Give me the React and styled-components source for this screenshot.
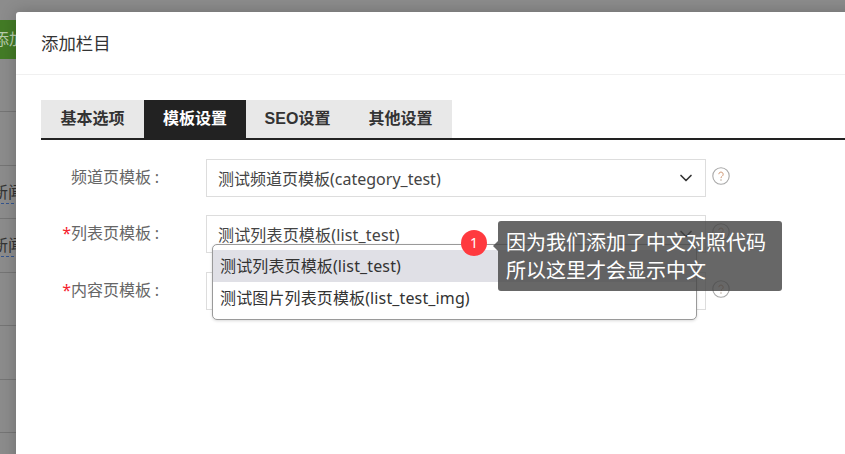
import React from "react";
import styled, { createGlobalStyle } from "styled-components";
import { ChevronDown } from "lucide-react";

const Global = createGlobalStyle`
  html, body { margin: 0; padding: 0; background: #8a8a8a; }
  * { box-sizing: border-box; }
`;
const FONT = `"Noto Sans", "Noto Sans CJK SC", sans-serif`;
const TAB_FONT = `"Liberation Sans", "Noto Sans CJK SC", sans-serif`;

const Page = styled.div`
  width: 845px; height: 454px; overflow: hidden; display: flex;
  background: #8c8c8c; font-family: ${FONT};
`;
const Backdrop = styled.div`
  width: 16px; flex: none; display: flex; flex-direction: column; overflow: hidden;
`;
const GreenButton = styled.div`
  margin-top: 20px; height: 39px; width: 16px; flex: none; background: #437b26;
  color: #b9ccae; font-size: 16px; line-height: 39px; white-space: nowrap; text-indent: -7px;
  overflow: hidden;
`;
const BackRow = styled.div`
  height: ${p => p.$h || 54}px; flex: none; border-bottom: 1px solid #757575;
  color: #333; font-size: 16px; overflow: hidden; white-space: nowrap;
  padding-top: 15px; text-indent: -4px; line-height: 21px;
`;
const BackLink = styled.span`
  display: inline-block; border-bottom: 1px dashed #34558f; line-height: 22px;
`;
const Modal = styled.div`
  position: relative; flex: none; width: 900px; margin-top: 12px; height: 460px; background: #fff;
  border-radius: 3px 3px 0 0; color: #333; box-shadow: 0 0 16px rgba(0,0,0,.22);
`;
const Header = styled.div`
  height: 63px; padding-left: 25px; border-bottom: 1px solid #f0f0f0;
  font-size: 17.4px; line-height: 62px; color: #333;
`;
const Body = styled.div`
  padding: 25px 0 0 25px; position: relative;
`;
const Tabs = styled.div`
  display: flex; height: 40px; border-bottom: 2px solid #222; font-family: ${TAB_FONT};
`;
const Tab = styled.div`
  width: ${p => p.$w}px; height: 38px; text-align: center; line-height: 38px;
  font-size: 16px; font-weight: 700;
  background: ${p => (p.$active ? "#222" : "#e8e8e8")};
  color: ${p => (p.$active ? "#fff" : "#333")};
`;
const Form = styled.div`
  margin-top: 18.9px; display: flex; flex-direction: column; gap: 18.5px;
`;
const Row = styled.div`
  display: flex; align-items: flex-start; height: 38px;
`;
const Label = styled.div`
  width: 118px; text-align: right; font-size: 16px; line-height: 36px; color: #666;
  white-space: nowrap; margin-right: 47px;
`;
const Star = styled.span`
  color: #f5222d;
`;
const Colon = styled.span`
  padding-left: 3.7px;
`;
const Select = styled.div`
  width: 500px; height: 38px; border: 1px solid #ddd; display: flex; align-items: center;
  justify-content: space-between; padding: 0 9px 0 11px; font-size: 16px; color: #444; background: #fff;
`;
const Value = styled.span`
  letter-spacing: ${p => (p.$tight ? "0" : ".17px")};
`;
const Help = styled.svg`
  width: 18px; height: 18px; margin: 8px 0 0 6px; flex: none;
`;
const Dropdown = styled.div`
  position: absolute; left: 196px; top: 169px; width: 485px; height: 76px; background: #fff;
  border: 1px solid #9a9a9a; border-radius: 5px; padding-top: 5px;
  box-shadow: 0 1px 3px rgba(0,0,0,.15); font-size: 16px; color: #333;
`;
const Option = styled.div`
  height: 32px; line-height: 32px; padding-left: 7px; letter-spacing: .13px;
  background: ${p => (p.$active ? "#e0e0e6" : "transparent")};
`;
const Tooltip = styled.div`
  position: absolute; left: 482px; top: 146px; width: 284px; height: 70px;
  background: rgba(70,70,70,.82); border-radius: 3px; color: #fff;
  font-size: 20px; line-height: 28px; padding: 8px 0 0 8px; white-space: nowrap;
  &::before {
    content: ""; position: absolute; left: -5px; top: 20px;
    border: 5px solid transparent; border-left: 0; border-right-color: rgba(70,70,70,.82);
  }
`;
const Badge = styled.div`
  position: absolute; left: 445px; top: 155px; width: 26px; height: 26px; border-radius: 50%;
  background: #ff3a3f; color: #fff; font-size: 14px; line-height: 26px; text-align: center;
`;

const HelpIcon = () => (
  <Help viewBox="0 0 18 18" fill="none">
    <circle cx="9" cy="9" r="8.2" stroke="#a8a8a8" strokeWidth="1.1" />
    <path d="M6.8 7.2a2.2 2.2 0 1 1 3.4 1.9c-.8.5-1.2 1-1.2 2" stroke="#d09a78" strokeWidth="1" />
    <circle cx="9" cy="13" r=".7" fill="#a89888" />
  </Help>
);

const rows = [
  { label: "频道页模板", value: "测试频道页模板(category_test)", tight: true },
  { label: "列表页模板", value: "测试列表页模板(list_test)", req: true },
  { label: "内容页模板", value: "", req: true },
];

export default function App() {
  return (
    <Page>
      <Global />
      <Backdrop>
        <GreenButton>添加</GreenButton>
        <BackRow $h={53} />
        <BackRow />
        <BackRow $h={53}><BackLink>新闻</BackLink></BackRow>
        <BackRow><BackLink>新闻</BackLink></BackRow>
        <BackRow $h={53} />
        <BackRow />
        <BackRow $h={53} />
      </Backdrop>
      <Modal>
        <Header>添加栏目</Header>
        <Body>
          <Tabs>
            <Tab $w={103}>基本选项</Tab>
            <Tab $w={102} $active>模板设置</Tab>
            <Tab $w={103}>SEO设置</Tab>
            <Tab $w={103}>其他设置</Tab>
          </Tabs>
          <Form>
            {rows.map(r => (
              <Row key={r.label}>
                <Label>{r.req && <Star>*</Star>}{r.label}<Colon>:</Colon></Label>
                <Select>
                  <Value $tight={r.tight}>{r.value}</Value>
                  <ChevronDown size={20} color="#333" strokeWidth={2} />
                </Select>
                <HelpIcon />
              </Row>
            ))}
          </Form>
          <Dropdown>
            <Option $active>测试列表页模板(list_test)</Option>
            <Option>测试图片列表页模板(list_test_img)</Option>
          </Dropdown>
          <Badge>1</Badge>
          <Tooltip>因为我们添加了中文对照代码<br />所以这里才会显示中文</Tooltip>
        </Body>
      </Modal>
    </Page>
  );
}
